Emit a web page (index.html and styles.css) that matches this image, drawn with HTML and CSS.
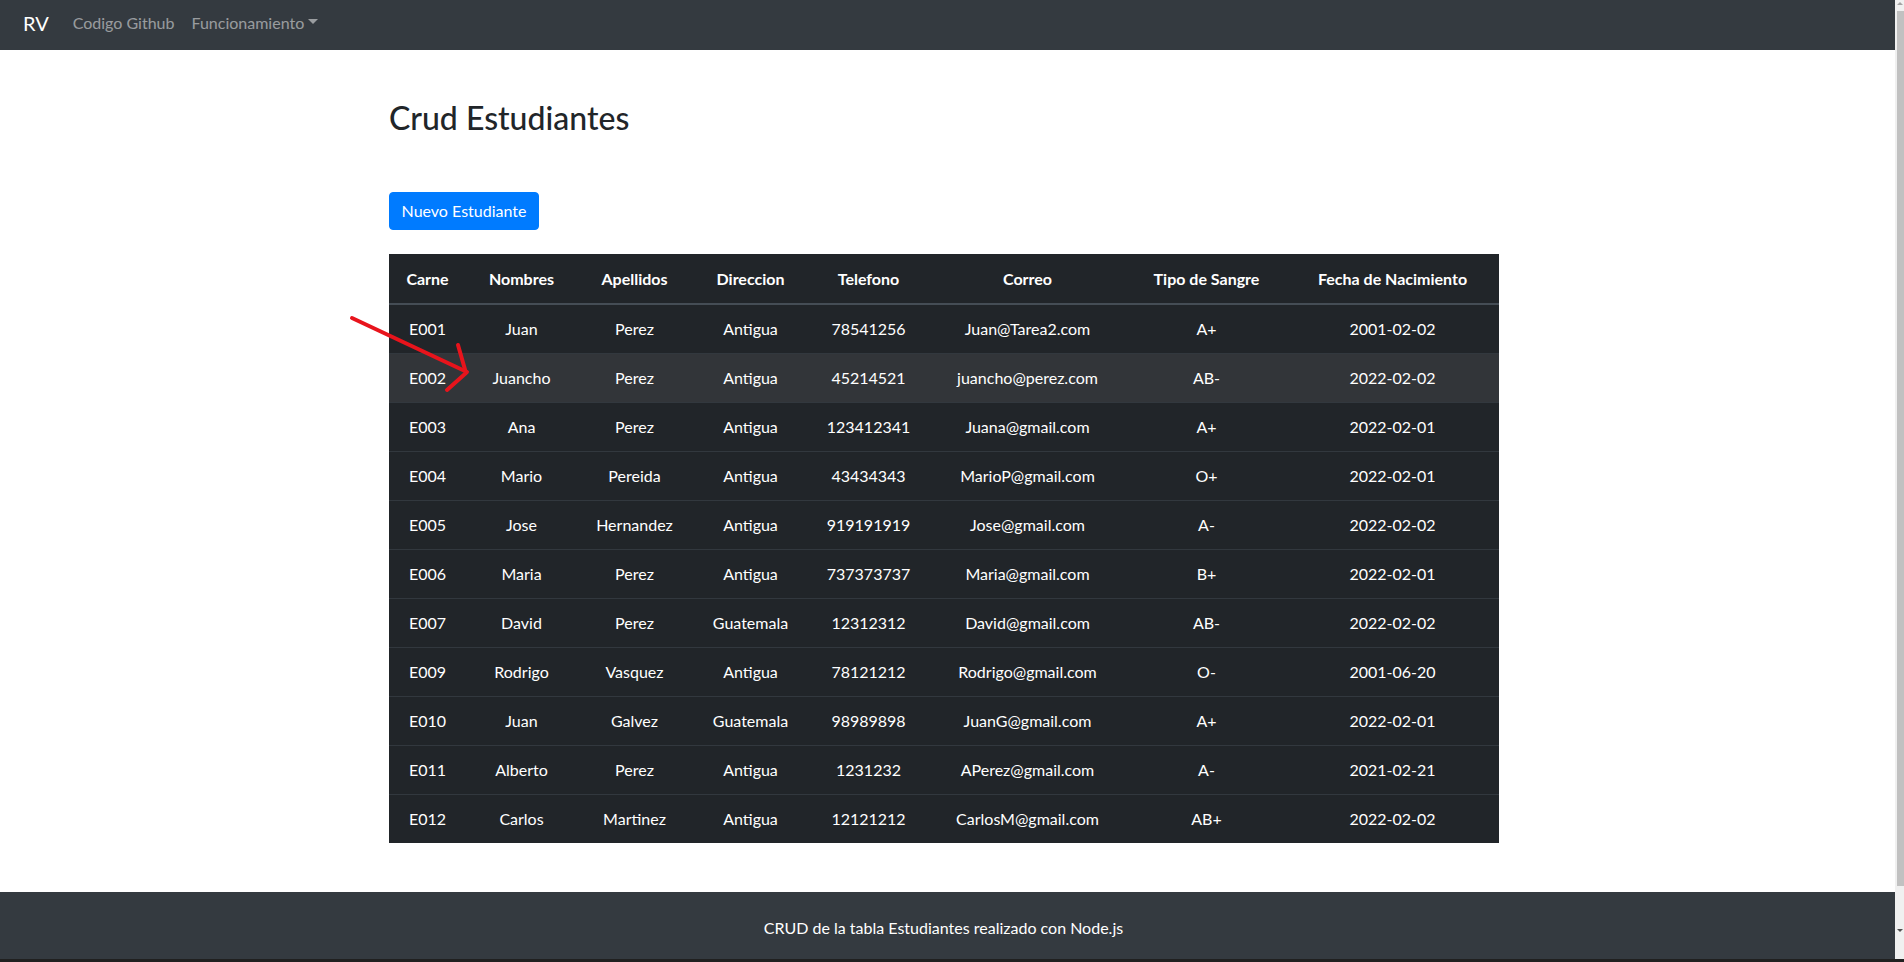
FILE: index.html
```html
<!DOCTYPE html>
<html lang="es">
<head>
<meta charset="utf-8">
<title>Crud Estudiantes</title>
<link rel="stylesheet" href="styles.css">
</head>
<body>
<div class="window">
  <div class="page">
    <nav class="navbar">
      <span class="brand">RV</span>
      <a class="nav-link">Codigo Github</a>
      <a class="nav-link dropdown">Funcionamiento<span class="caret"></span></a>
    </nav>
    <main class="main">
      <div class="container">
        <h2 class="title">Crud Estudiantes</h2>
        <button class="btn">Nuevo Estudiante</button>
        <table class="table">
          <colgroup>
            <col class="c1"><col class="c2"><col class="c3"><col class="c4"><col class="c5"><col class="c6"><col class="c7"><col class="c8">
          </colgroup>
          <thead>
            <tr><th>Carne</th><th>Nombres</th><th>Apellidos</th><th>Direccion</th><th>Telefono</th><th>Correo</th><th>Tipo de Sangre</th><th>Fecha de Nacimiento</th></tr>
          </thead>
          <tbody>
            <tr><td>E001</td><td>Juan</td><td>Perez</td><td>Antigua</td><td>78541256</td><td>Juan@Tarea2.com</td><td>A+</td><td>2001-02-02</td></tr>
            <tr class="hover"><td>E002</td><td>Juancho</td><td>Perez</td><td>Antigua</td><td>45214521</td><td>juancho@perez.com</td><td>AB-</td><td>2022-02-02</td></tr>
            <tr><td>E003</td><td>Ana</td><td>Perez</td><td>Antigua</td><td>123412341</td><td>Juana@gmail.com</td><td>A+</td><td>2022-02-01</td></tr>
            <tr><td>E004</td><td>Mario</td><td>Pereida</td><td>Antigua</td><td>43434343</td><td>MarioP@gmail.com</td><td>O+</td><td>2022-02-01</td></tr>
            <tr><td>E005</td><td>Jose</td><td>Hernandez</td><td>Antigua</td><td>919191919</td><td>Jose@gmail.com</td><td>A-</td><td>2022-02-02</td></tr>
            <tr><td>E006</td><td>Maria</td><td>Perez</td><td>Antigua</td><td>737373737</td><td>Maria@gmail.com</td><td>B+</td><td>2022-02-01</td></tr>
            <tr><td>E007</td><td>David</td><td>Perez</td><td>Guatemala</td><td>12312312</td><td>David@gmail.com</td><td>AB-</td><td>2022-02-02</td></tr>
            <tr><td>E009</td><td>Rodrigo</td><td>Vasquez</td><td>Antigua</td><td>78121212</td><td>Rodrigo@gmail.com</td><td>O-</td><td>2001-06-20</td></tr>
            <tr><td>E010</td><td>Juan</td><td>Galvez</td><td>Guatemala</td><td>98989898</td><td>JuanG@gmail.com</td><td>A+</td><td>2022-02-01</td></tr>
            <tr><td>E011</td><td>Alberto</td><td>Perez</td><td>Antigua</td><td>1231232</td><td>APerez@gmail.com</td><td>A-</td><td>2021-02-21</td></tr>
            <tr><td>E012</td><td>Carlos</td><td>Martinez</td><td>Antigua</td><td>12121212</td><td>CarlosM@gmail.com</td><td>AB+</td><td>2022-02-02</td></tr>
          </tbody>
        </table>
      </div>
    </main>
    <footer class="footer">
      <p class="footer-text">CRUD de la tabla Estudiantes realizado con Node.js</p>
    </footer>
    <svg class="annotation" width="140" height="90" viewBox="0 0 140 90">
      <g fill="none" stroke="#e8141c" stroke-width="4" stroke-linecap="round" stroke-linejoin="round">
        <path d="M12 10 L127 64"/>
        <path d="M118 37 L126 65 L107 82"/>
      </g>
    </svg>
  </div>
  <div class="scrollbar">
    <span class="arrow-up"></span>
    <span class="thumb"></span>
    <span class="arrow-down"></span>
  </div>
</div>
<div class="bottom-edge"></div>
</body>
</html>
```
FILE: styles.css
```css
* { box-sizing: border-box; }

html, body {
  margin: 0;
  padding: 0;
  height: 962px;
  overflow: hidden;
}

body {
  font-family: "Lato", "Open Sans", "Liberation Sans", sans-serif;
  font-size: 16px;
  line-height: 1.5;
  color: #212529;
  background: #ffffff;
  display: flex;
  flex-direction: column;
}

.window {
  display: flex;
  height: 959px;
}

.page {
  flex: 1;
  display: flex;
  flex-direction: column;
  position: relative;
  min-width: 0;
}

/* Navbar */
.navbar {
  height: 50px;
  background: #343a40;
  display: flex;
  align-items: center;
  padding: 0 0 5px 23px;
}

.brand {
  color: #ffffff;
  font-size: 20px;
  line-height: 30px;
  margin-right: 24px;
}

.nav-link {
  color: rgba(255, 255, 255, 0.5);
  font-size: 16px;
  margin-right: 17px;
  display: flex;
  align-items: center;
}

.caret {
  display: inline-block;
  margin-left: 4px;
  width: 0;
  height: 0;
  border-top: 5px solid rgba(255, 255, 255, 0.5);
  border-left: 5px solid transparent;
  border-right: 5px solid transparent;
  margin-top: -2px;
}

/* Main */
.main {
  flex: 1;
}

.container {
  width: 1110px;
  margin-left: 389px;
  padding-top: 49px;
}

.title {
  font-size: 32px;
  font-weight: 500;
  line-height: 1.2;
  margin: 0 0 55px 0;
  color: #212529;
}

.btn {
  display: block;
  font-family: inherit;
  font-size: 16px;
  line-height: 24px;
  color: #ffffff;
  background: #007bff;
  border: 1px solid #007bff;
  border-radius: 4px;
  padding: 6px 0;
  height: 38px;
  width: 150px;
  white-space: nowrap;
  text-align: center;
  margin-bottom: 24px;
}

.table {
  width: 1110px;
  table-layout: fixed;
  border-collapse: collapse;
  background: #212529;
  color: #ffffff;
  text-align: center;
}

.c1 { width: 77px; }
.c2 { width: 111px; }
.c3 { width: 115px; }
.c4 { width: 117px; }
.c5 { width: 119px; }
.c6 { width: 199px; }
.c7 { width: 159px; }
.c8 { width: 213px; }

.table th,
.table td {
  padding: 12px 4px;
  border-top: 1px solid #32383e;
  white-space: nowrap;
  font-size: 16px;
  line-height: 24px;
}

.table th {
  font-weight: 700;
  border-bottom: 2px solid #454d55;
  border-top: none;
  padding-top: 13px;
}

.table tbody tr:first-child td {
  border-top: none;
}

.table tr.hover td {
  background: #323539;
}

/* Footer */
.footer {
  height: 67px;
  background: #343a40;
  display: flex;
  align-items: center;
  justify-content: center;
  padding-right: 8px;
}

.footer-text {
  margin: 0;
  color: #ffffff;
  font-size: 16px;
  padding-top: 5px;
}

/* Annotation arrow drawn over the table */
.annotation {
  position: absolute;
  left: 340px;
  top: 308px;
}

/* Fake scrollbar */
.scrollbar {
  width: 9px;
  background: #f0f0f0;
  display: flex;
  flex-direction: column;
  align-items: flex-end;
}

.arrow-up {
  width: 0;
  height: 0;
  margin: 2px 1px 0 0;
  border-bottom: 3px solid #a3a3a3;
  border-left: 3px solid transparent;
  border-right: 3px solid transparent;
}

.thumb {
  width: 7px;
  height: 875px;
  margin-top: 6px;
  background: #c1c1c1;
}

.arrow-down {
  width: 0;
  height: 0;
  margin: 43px 1px 0 0;
  border-top: 3px solid #505050;
  border-left: 3px solid transparent;
  border-right: 3px solid transparent;
}

.bottom-edge {
  height: 3px;
  background: #202020;
}
```
